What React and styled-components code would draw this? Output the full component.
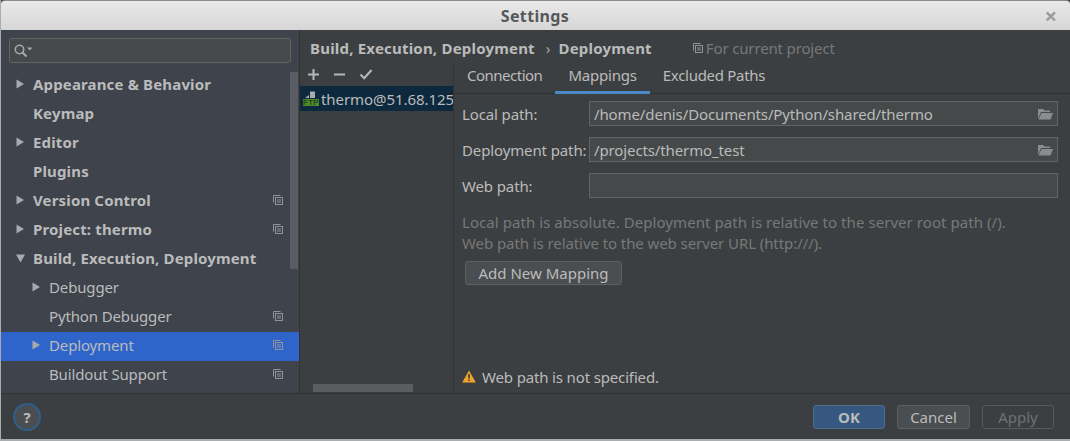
import React from 'react'
import styled, { createGlobalStyle } from 'styled-components'

const GlobalStyle = createGlobalStyle`
  html, body {
    margin: 0;
    padding: 0;
    background: #3c3f41;
  }
  * {
    box-sizing: border-box;
  }
`

const treeItems = [
  { label: 'Appearance & Behavior', bold: true, arrow: 'right' },
  { label: 'Keymap', bold: true },
  { label: 'Editor', bold: true, arrow: 'right' },
  { label: 'Plugins', bold: true },
  { label: 'Version Control', bold: true, arrow: 'right', copy: true },
  { label: 'Project: thermo', bold: true, arrow: 'right', copy: true },
  { label: 'Build, Execution, Deployment', bold: true, arrow: 'down' },
  { label: 'Debugger', child: true, arrow: 'right' },
  { label: 'Python Debugger', child: true, copy: true },
  { label: 'Deployment', child: true, arrow: 'right', copy: true, selected: true },
  { label: 'Buildout Support', child: true, copy: true },
]

const CopyIcon = ({ size = 10 }) => (
  <svg width={size} height={size} viewBox="0 0 10 10" fill="none" stroke="#8f9499" strokeWidth="1">
    <path d="M0.5 7.5V0.5H7.5" />
    <rect x="2.5" y="2.5" width="7" height="7" />
    <path d="M4 5H8M4 7H8" />
  </svg>
)

const Arrow = ({ dir }) => (
  <svg width="9" height="10" viewBox="0 0 9 10" fill="#a8abad">
    {dir === 'down' ? <path d="M0 1.5H9L4.5 9.5Z" /> : <path d="M0.5 0.5L8 5L0.5 9.5Z" />}
  </svg>
)

const FolderIcon = () => (
  <svg width="16" height="12" viewBox="0 0 16 12">
    <path d="M1 11V1H6L7.5 2.5H13V4H4L1 11Z" fill="#8a8d8f" />
    <path d="M4.5 5H16L13.5 11.5H1.5Z" fill="#8a8d8f" />
  </svg>
)

const SearchIcon = () => (
  <svg width="19" height="14" viewBox="0 0 19 14" fill="none">
    <circle cx="5.5" cy="5.5" r="4.2" stroke="#a6a9ab" strokeWidth="1.6" />
    <path d="M8.5 8.5L12.5 12.5" stroke="#a6a9ab" strokeWidth="2.2" />
    <path d="M13 3.5H18.5L15.8 6.5Z" fill="#a6a9ab" />
  </svg>
)

const FtpIcon = () => (
  <FtpWrap>
    <svg width="16" height="16" viewBox="0 0 16 16">
      <path d="M2 7L6 4V7ZM7 0.5H12V7H7Z" fill="#a9adb0" />
      <rect x="0" y="8" width="16" height="7" fill="#4d8a2e" />
    </svg>
    <FtpLabel>FTP</FtpLabel>
  </FtpWrap>
)

export default function App() {
  return (
    <Page>
      <GlobalStyle />
      <TitleBar>
        <Title>Settings</Title>
        <CloseButton>×</CloseButton>
      </TitleBar>
      <Body>
        <Sidebar>
          <SearchBox>
            <SearchIcon />
          </SearchBox>
          <TreeArea>
            <Tree>
              {treeItems.map((item) => (
                <TreeRow key={item.label} $selected={item.selected} $child={item.child}>
                  <ArrowSlot>{item.arrow && <Arrow dir={item.arrow} />}</ArrowSlot>
                  <TreeLabel $bold={item.bold}>{item.label}</TreeLabel>
                  {item.copy && <CopySlot><CopyIcon /></CopySlot>}
                </TreeRow>
              ))}
            </Tree>
            <VScroll />
          </TreeArea>
        </Sidebar>
        <Main>
          <Crumbs>
            <CrumbText>Build, Execution, Deployment</CrumbText>
            <CrumbSep>›</CrumbSep>
            <CrumbText>Deployment</CrumbText>
            <ProjectNote>
              <CopyIcon />
              <span>For current project</span>
            </ProjectNote>
          </Crumbs>
          <Split>
            <ServerPanel>
              <ListToolbar>
                <svg width="13" height="13" viewBox="0 0 13 13" fill="#b4b7b9"><path d="M5.5 1H7.5V5.5H12V7.5H7.5V12H5.5V7.5H1V5.5H5.5Z" /></svg>
                <svg width="13" height="13" viewBox="0 0 13 13" fill="#b4b7b9"><path d="M1 5.5H12V7.5H1Z" /></svg>
                <svg width="14" height="13" viewBox="0 0 14 13" fill="none" stroke="#b4b7b9" strokeWidth="2.2"><path d="M1.5 6.5L5.2 10.2L12.5 2" /></svg>
              </ListToolbar>
              <ServerRow>
                <FtpIcon />
                <ServerName>thermo@51.68.125</ServerName>
              </ServerRow>
              <HScroll />
            </ServerPanel>
            <DetailPanel>
              <Tabs>
                <Tab $spacing="-0.5px">Connection</Tab>
                <Tab $active $spacing="-0.2px">Mappings</Tab>
                <Tab $spacing="-0.3px">Excluded Paths</Tab>
              </Tabs>
              <Content>
                <FormGrid>
                  <FieldLabel>Local path:</FieldLabel>
                  <Field>
                    <FieldText>/home/denis/Documents/Python/shared/thermo</FieldText>
                    <FolderIcon />
                  </Field>
                  <FieldLabel>Deployment path:</FieldLabel>
                  <Field>
                    <FieldText>/projects/thermo_test</FieldText>
                    <FolderIcon />
                  </Field>
                  <FieldLabel>Web path:</FieldLabel>
                  <Field />
                </FormGrid>
                <HelpText>
                  <HelpLine $spacing="0.06px">Local path is absolute. Deployment path is relative to the server root path (/).</HelpLine>
                  <HelpLine $spacing="-0.08px">Web path is relative to the web server URL (http:///).</HelpLine>
                </HelpText>
                <AddButton>Add New Mapping</AddButton>
                <Warning>
                  <svg width="14" height="13" viewBox="0 0 14 13">
                    <path d="M7 0.5L13.8 12.5H0.2Z" fill="#eea52c" />
                    <path d="M6.2 4H7.8V8.5H6.2ZM6.2 9.5H7.8V11H6.2Z" fill="#3c3f41" />
                  </svg>
                  <span>Web path is not specified.</span>
                </Warning>
              </Content>
            </DetailPanel>
          </Split>
        </Main>
      </Body>
      <Footer>
        <HelpButton>?</HelpButton>
        <FooterButtons>
          <FooterButton $primary>OK</FooterButton>
          <FooterButton $wide>Cancel</FooterButton>
          <FooterButton $disabled>Apply</FooterButton>
        </FooterButtons>
      </Footer>
    </Page>
  )
}

const Page = styled.div`
  width: 1070px;
  height: 441px;
  display: flex;
  flex-direction: column;
  overflow: hidden;
  background: #3c3f41;
  border-left: 1px solid #a9abac;
  border-bottom: 2px solid #a9abac;
  font-family: "Noto Sans", sans-serif;
  font-size: 15px;
  color: #bbbbbb;
`

const TitleBar = styled.div`
  height: 30px;
  flex: none;
  display: flex;
  align-items: center;
  justify-content: center;
  position: relative;
  background: linear-gradient(#e9e9e9, #d6d6d6);
  border-top: 1px solid #8a8a8a;
  border-radius: 4px 4px 0 0;
`

const Title = styled.div`
  font-size: 16px;
  font-weight: 700;
  letter-spacing: 0.35px;
  margin-right: 1px;
  color: #55585a;
`

const CloseButton = styled.div`
  position: absolute;
  right: 13px;
  top: 1px;
  font-size: 22px;
  line-height: 26px;
  font-weight: 700;
  color: #9a9c9d;
`

const Body = styled.div`
  height: 364px;
  flex: none;
  display: flex;
  border-bottom: 1px solid #323232;
`

const Sidebar = styled.div`
  width: 298px;
  flex: none;
  display: flex;
  flex-direction: column;
  background: #3e434c;
`

const SearchBox = styled.div`
  height: 25px;
  width: 282px;
  margin: 8px 0 0 8px;
  padding: 0 0 0 4px;
  flex: none;
  display: flex;
  align-items: center;
  background: #45494a;
  border: 1px solid #646464;
  border-radius: 3px;
`

const TreeArea = styled.div`
  flex: 1;
  position: relative;
  margin-top: 8px;
  min-height: 0;
`

const Tree = styled.div`
  width: 298px;
`

const VScroll = styled.div`
  position: absolute;
  left: 289px;
  top: 1px;
  width: 8px;
  height: 197px;
  background: #5a5d63;
`

const TreeRow = styled.div`
  height: 29px;
  display: flex;
  align-items: center;
  padding-left: ${(p) => (p.$child ? '31px' : '15px')};
  padding-bottom: 3px;
  background: ${(p) => (p.$selected ? '#2f65ca' : 'transparent')};
`

const ArrowSlot = styled.div`
  width: 17px;
  flex: none;
  display: flex;
  align-items: center;
`

const TreeLabel = styled.div`
  flex: 1;
  font-weight: ${(p) => (p.$bold ? 700 : 400)};
  letter-spacing: ${(p) => (p.$bold ? '0.15px' : '-0.14px')};
  color: #bbbbbb;
  white-space: nowrap;
`

const CopySlot = styled.div`
  width: 26px;
  flex: none;
  display: flex;
  align-items: center;
`

const Main = styled.div`
  flex: 1;
  display: flex;
  flex-direction: column;
  min-width: 0;
  border-left: 1px solid #323232;
`

const Crumbs = styled.div`
  height: 32px;
  flex: none;
  display: flex;
  align-items: center;
  padding: 3px 0 0 10px;
`

const CrumbText = styled.span`
  font-weight: 700;
  letter-spacing: 0.2px;
  color: #bbbbbb;
`

const CrumbSep = styled.span`
  margin: 0 8px 0 11px;
  color: #a5a8aa;
`

const ProjectNote = styled.div`
  display: flex;
  align-items: center;
  gap: 3px;
  margin-left: 41px;
  letter-spacing: -0.15px;
  color: #787878;
`

const Split = styled.div`
  flex: 1;
  display: flex;
  min-height: 0;
`

const ServerPanel = styled.div`
  width: 154px;
  flex: none;
  display: flex;
  flex-direction: column;
  overflow: hidden;
  border-right: 1px solid #323232;
`

const ListToolbar = styled.div`
  height: 24px;
  flex: none;
  display: flex;
  align-items: center;
  gap: 13px;
  padding-left: 7px;
`

const ServerRow = styled.div`
  height: 25px;
  flex: none;
  display: flex;
  align-items: center;
  gap: 2px;
  padding-left: 3px;
  background: #0d293e;
  white-space: nowrap;
`

const FtpWrap = styled.div`
  position: relative;
  width: 16px;
  height: 16px;
  flex: none;
`

const FtpLabel = styled.span`
  position: absolute;
  left: 0;
  right: 0;
  top: 8px;
  font-family: "Liberation Sans", sans-serif;
  font-size: 8px;
  line-height: 7px;
  letter-spacing: 0.3px;
  text-align: center;
  color: #16240f;
`

const ServerName = styled.span`
  letter-spacing: -0.06px;
  color: #bbbbbb;
`

const HScroll = styled.div`
  width: 100px;
  height: 8px;
  flex: none;
  margin: auto 0 1px 13px;
  background: #5a5d5f;
`

const DetailPanel = styled.div`
  flex: 1;
  display: flex;
  flex-direction: column;
  min-width: 0;
`

const Tabs = styled.div`
  height: 32px;
  flex: none;
  display: flex;
  border-bottom: 1px solid #323232;
`

const Tab = styled.div`
  height: 32px;
  display: flex;
  align-items: center;
  padding: 0 13px 3px;
  letter-spacing: ${(p) => p.$spacing};
  color: #bbbbbb;
  border-bottom: 3px solid ${(p) => (p.$active ? '#4a88c7' : 'transparent')};
`

const Content = styled.div`
  flex: 1;
  display: flex;
  flex-direction: column;
  align-items: flex-start;
  padding: 7px 12px 6px 8px;
  min-height: 0;
`

const FormGrid = styled.div`
  width: 100%;
  display: grid;
  grid-template-columns: 127px 1fr;
  row-gap: 11px;
  align-items: center;
`

const FieldLabel = styled.div`
  letter-spacing: -0.12px;
  color: #bbbbbb;
  white-space: nowrap;
`

const Field = styled.div`
  height: 25px;
  display: flex;
  align-items: center;
  justify-content: space-between;
  padding: 0 4px;
  background: #45494a;
  border: 1px solid #646464;
`

const FieldText = styled.span`
  letter-spacing: -0.12px;
  color: #bbbbbb;
`

const HelpText = styled.div`
  margin-top: 14px;
  line-height: 21px;
  color: #787878;
`

const HelpLine = styled.div`
  letter-spacing: ${(p) => p.$spacing};
  white-space: nowrap;
`

const AddButton = styled.div`
  width: 157px;
  height: 24px;
  margin: 7px 0 0 3px;
  display: flex;
  align-items: center;
  justify-content: center;
  background: #4a4e50;
  border: 1px solid #5e6060;
  border-radius: 3px;
  color: #bbbbbb;
`

const Warning = styled.div`
  margin-top: auto;
  display: flex;
  align-items: center;
  gap: 6px;
  height: 21px;
  letter-spacing: -0.15px;
  color: #bbbbbb;
`

const Footer = styled.div`
  flex: 1;
  display: flex;
  align-items: center;
  justify-content: space-between;
  padding: 0 16px 0 12px;
`

const HelpButton = styled.div`
  width: 28px;
  height: 28px;
  display: flex;
  align-items: center;
  justify-content: center;
  border-radius: 50%;
  background: #4a4e50;
  border: 2px solid #2f5f8c;
  font-weight: 700;
  font-size: 15px;
  color: #bbbbbb;
`

const FooterButtons = styled.div`
  display: flex;
  gap: 12px;
`

const FooterButton = styled.div`
  width: ${(p) => (p.$wide ? '73px' : '72px')};
  height: 24px;
  display: flex;
  align-items: center;
  justify-content: center;
  border-radius: 3px;
  font-weight: ${(p) => (p.$primary ? 700 : 400)};
  color: ${(p) => (p.$disabled ? '#6f7173' : '#bbbbbb')};
  background: ${(p) => (p.$primary ? '#365880' : p.$disabled ? 'transparent' : '#4a4e50')};
  border: 1px solid ${(p) => (p.$primary ? '#4c708c' : p.$disabled ? '#585a5c' : '#5e6060')};
`
